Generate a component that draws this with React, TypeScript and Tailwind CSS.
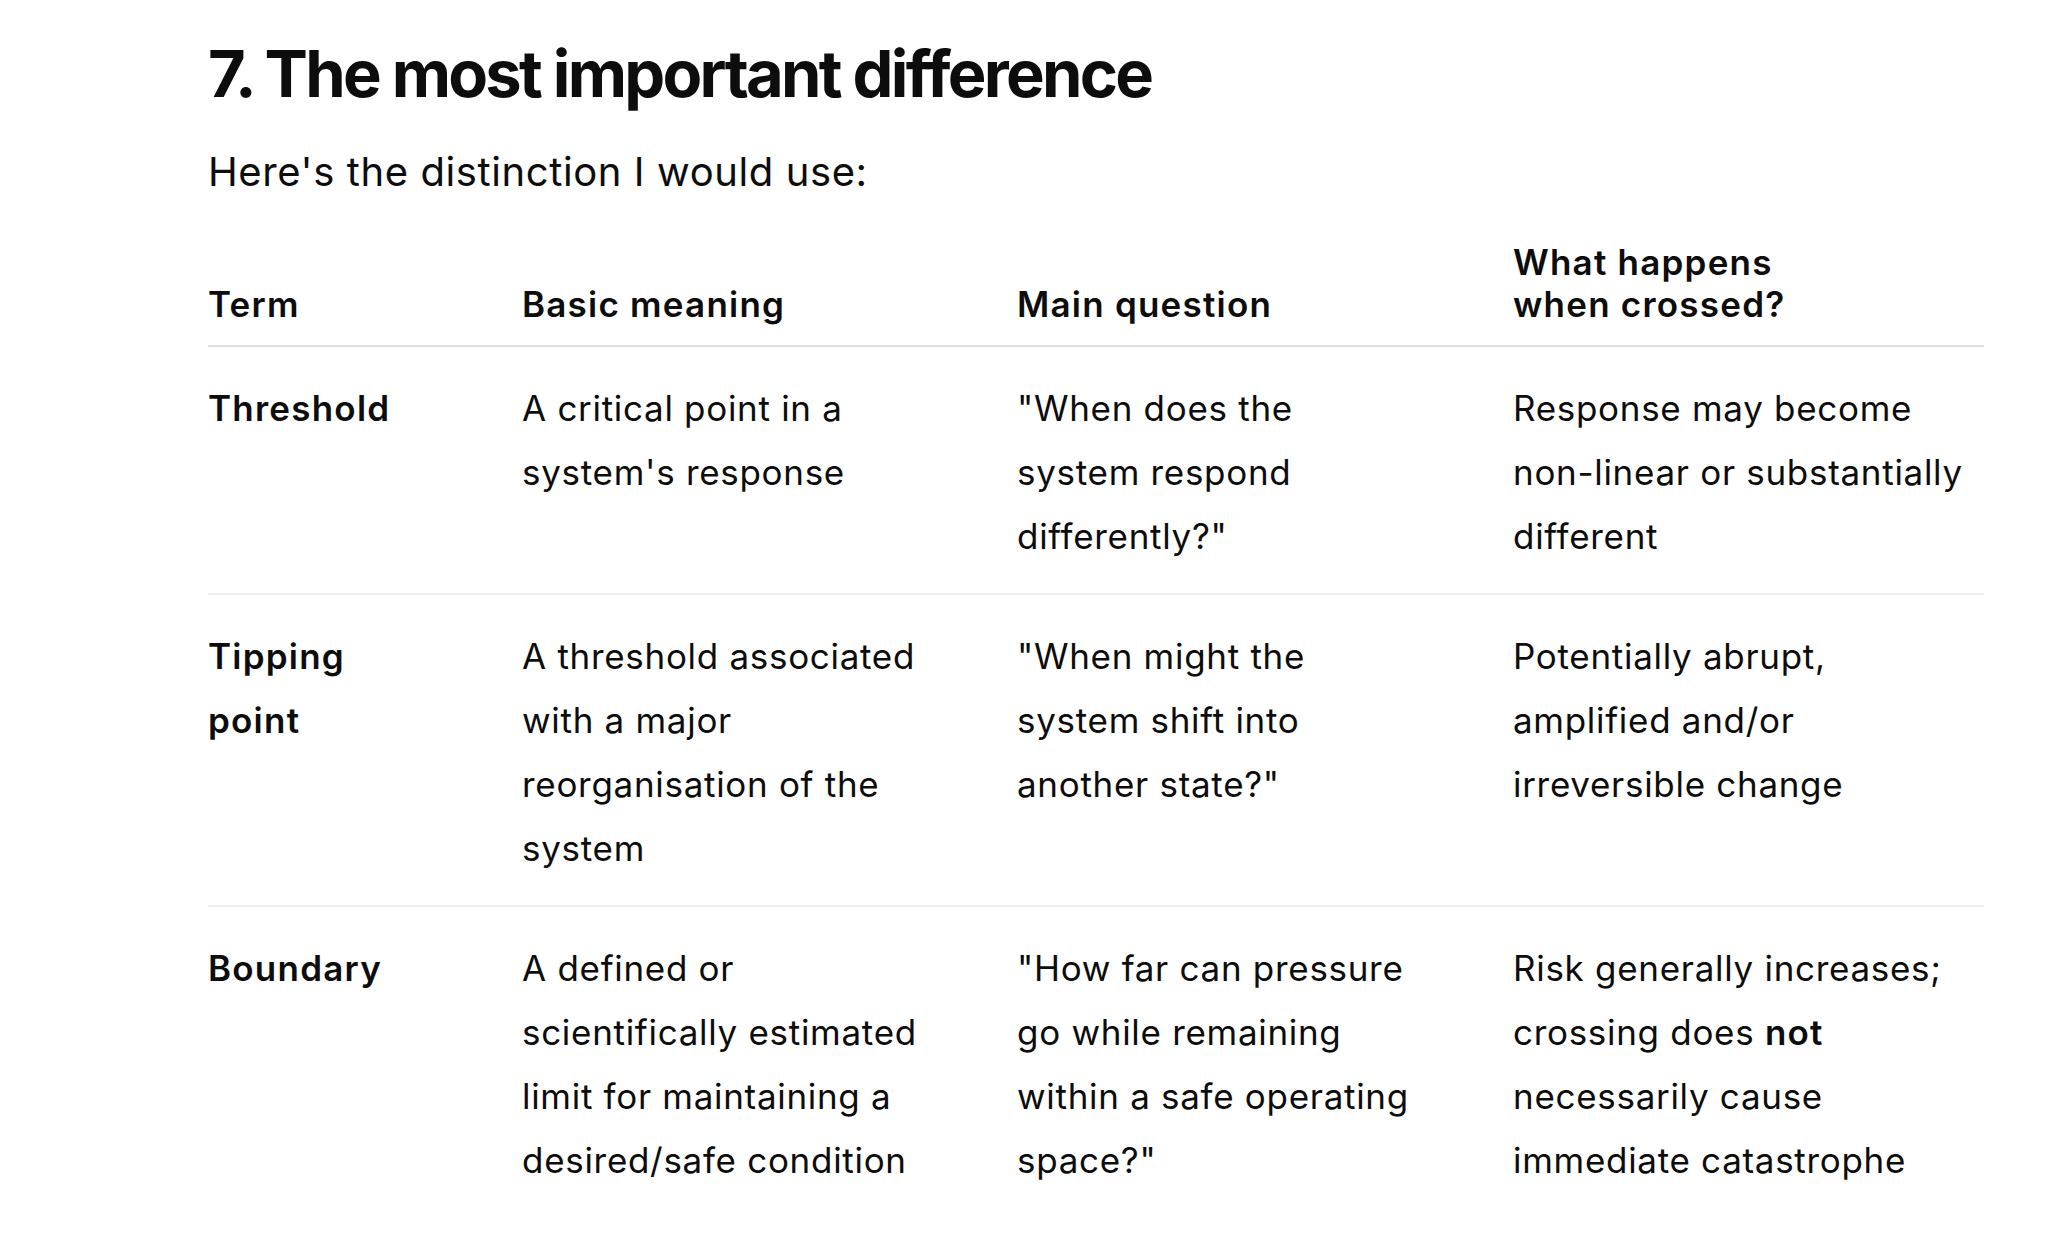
import React from 'react';

type Row = {
  term: string[];
  meaning: string[];
  question: string[];
  crossed: React.ReactNode[];
};

const rows: Row[] = [
  {
    term: ['Threshold'],
    meaning: ['A critical point in a', "system's response"],
    question: ['"When does the', 'system respond', 'differently?"'],
    crossed: ['Response may become', 'non-linear or substantially', 'different'],
  },
  {
    term: ['Tipping', 'point'],
    meaning: ['A threshold associated', 'with a major', 'reorganisation of the', 'system'],
    question: ['"When might the', 'system shift into', 'another state?"'],
    crossed: ['Potentially abrupt,', 'amplified and/or', 'irreversible change'],
  },
  {
    term: ['Boundary'],
    meaning: ['A defined or', 'scientifically estimated', 'limit for maintaining a', 'desired/safe condition'],
    question: ['"How far can pressure', 'go while remaining', 'within a safe operating', 'space?"'],
    crossed: [
      'Risk generally increases;',
      <>
        crossing does <strong className="font-semibold tracking-[0.035em]">not</strong>
      </>,
      'necessarily cause',
      'immediate catastrophe',
    ],
  },
];

const Lines: React.FC<{ lines: React.ReactNode[]; className?: string }> = ({ lines, className }) => (
  <div className={className}>
    {lines.map((line, i) => (
      <div key={i} className="whitespace-nowrap">
        {line}
      </div>
    ))}
  </div>
);

const App: React.FC = () => {
  return (
    <div
      className="min-h-screen bg-white text-[#0d0d0d] pl-[208px] pt-[34px]"
      style={{ fontFamily: 'Inter, "Noto Sans", sans-serif' }}
    >
      <div className="w-[1776px]">
        <h1 className="text-[65px] leading-[80px] font-bold tracking-[-0.042em]">
          7. The most important difference
        </h1>
        <p className="mt-[30px] text-[40px] leading-[56px] tracking-[0.015em]">
          Here's the distinction I would use:
        </p>

        <div className="mt-[41px] text-[35px] tracking-[0.02em]">
          {/* Header */}
          <div className="grid grid-cols-[314px_495px_496px_1fr] items-end pb-[20px] border-b-2 border-[#dedede] font-semibold tracking-[0.035em] leading-[42px]">
            <div>Term</div>
            <div>Basic meaning</div>
            <div>Main question</div>
            <div>
              What happens
              <br />
              when crossed?
            </div>
          </div>

          {/* Body rows */}
          {rows.map((row, i) => (
            <div
              key={i}
              className={`grid grid-cols-[314px_495px_496px_1fr] items-start pt-[29px] pb-[25px] leading-[64px] ${
                i < rows.length - 1 ? 'border-b-2 border-[#f0f0f0]' : ''
              }`}
            >
              <Lines lines={row.term} className="font-semibold tracking-[0.035em]" />
              <Lines lines={row.meaning} />
              <Lines lines={row.question} />
              <Lines lines={row.crossed} />
            </div>
          ))}
        </div>
      </div>
    </div>
  );
};

export default App;
